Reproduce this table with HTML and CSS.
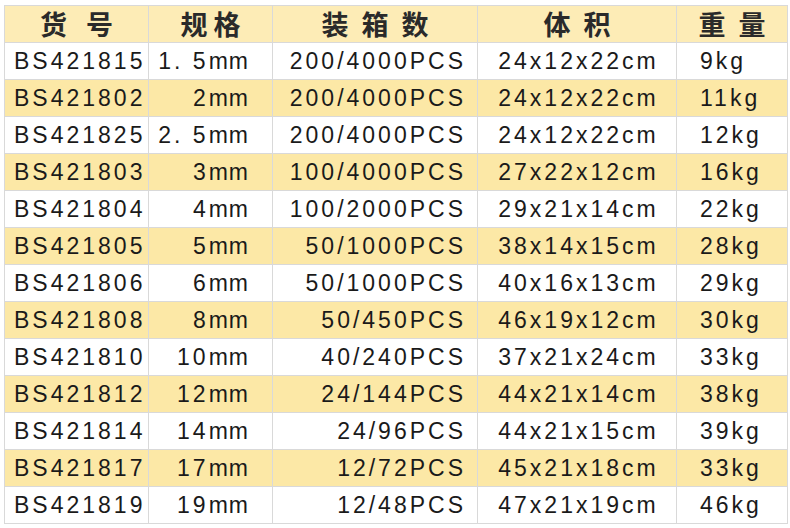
FILE: index.html
```html
<!DOCTYPE html>
<html lang="zh">
<head>
<meta charset="utf-8">
<title>规格表</title>
<link rel="stylesheet" href="styles.css">
</head>
<body>
<table class="spec">
  <colgroup>
    <col class="c1"><col class="c2"><col class="c3"><col class="c4"><col class="c5">
  </colgroup>
  <thead>
    <tr>
      <th class="h-wide">货号</th>
      <th class="h-tight">规格</th>
      <th class="h-mid">装箱数</th>
      <th class="h-mid">体积</th>
      <th class="h-mid">重量</th>
    </tr>
  </thead>
  <tbody>
    <tr><td class="code">BS421815</td><td class="size">1. 5<span class="unit">mm</span></td><td class="pack">200/4000PCS</td><td class="vol">24x12x22cm</td><td class="wt">9kg</td></tr>
    <tr class="alt"><td class="code">BS421802</td><td class="size">2<span class="unit">mm</span></td><td class="pack">200/4000PCS</td><td class="vol">24x12x22cm</td><td class="wt">11kg</td></tr>
    <tr><td class="code">BS421825</td><td class="size">2. 5<span class="unit">mm</span></td><td class="pack">200/4000PCS</td><td class="vol">24x12x22cm</td><td class="wt">12kg</td></tr>
    <tr class="alt"><td class="code">BS421803</td><td class="size">3<span class="unit">mm</span></td><td class="pack">100/4000PCS</td><td class="vol">27x22x12cm</td><td class="wt">16kg</td></tr>
    <tr><td class="code">BS421804</td><td class="size">4<span class="unit">mm</span></td><td class="pack">100/2000PCS</td><td class="vol">29x21x14cm</td><td class="wt">22kg</td></tr>
    <tr class="alt"><td class="code">BS421805</td><td class="size">5<span class="unit">mm</span></td><td class="pack">50/1000PCS</td><td class="vol">38x14x15cm</td><td class="wt">28kg</td></tr>
    <tr><td class="code">BS421806</td><td class="size">6<span class="unit">mm</span></td><td class="pack">50/1000PCS</td><td class="vol">40x16x13cm</td><td class="wt">29kg</td></tr>
    <tr class="alt"><td class="code">BS421808</td><td class="size">8<span class="unit">mm</span></td><td class="pack">50/450PCS</td><td class="vol">46x19x12cm</td><td class="wt">30kg</td></tr>
    <tr><td class="code">BS421810</td><td class="size">10<span class="unit">mm</span></td><td class="pack">40/240PCS</td><td class="vol">37x21x24cm</td><td class="wt">33kg</td></tr>
    <tr class="alt"><td class="code">BS421812</td><td class="size">12<span class="unit">mm</span></td><td class="pack">24/144PCS</td><td class="vol">44x21x14cm</td><td class="wt">38kg</td></tr>
    <tr><td class="code">BS421814</td><td class="size">14<span class="unit">mm</span></td><td class="pack">24/96PCS</td><td class="vol">44x21x15cm</td><td class="wt">39kg</td></tr>
    <tr class="alt"><td class="code">BS421817</td><td class="size">17<span class="unit">mm</span></td><td class="pack">12/72PCS</td><td class="vol">45x21x18cm</td><td class="wt">33kg</td></tr>
    <tr><td class="code">BS421819</td><td class="size">19<span class="unit">mm</span></td><td class="pack">12/48PCS</td><td class="vol">47x21x19cm</td><td class="wt">46kg</td></tr>
  </tbody>
</table>
</body>
</html>
```
FILE: styles.css
```css
html, body {
  margin: 0;
  padding: 0;
  background: #ffffff;
}

body {
  padding: 5px 0 0 4px;
}

.spec {
  border-collapse: collapse;
  table-layout: fixed;
  width: 783px;
  font-family: "Liberation Sans", "Noto Sans CJK SC", sans-serif;
  color: #1a1a1a;
}

.c1 { width: 144px; }
.c2 { width: 124px; }
.c3 { width: 205px; }
.c4 { width: 199px; }
.c5 { width: 111px; }

.spec th,
.spec td {
  border: 1px solid #d9d9d9;
  padding: 0;
  white-space: nowrap;
  overflow: hidden;
}

.spec thead tr {
  height: 37px;
  background: #fdecb6;
}

.spec th {
  font-family: "Noto Sans CJK SC", sans-serif;
  font-size: 27px;
  font-weight: 700;
  color: #2a2a2a;
  text-align: center;
  line-height: 34px;
}

.spec .h-wide { letter-spacing: 19px; text-indent: 19px; }
.spec .h-tight { letter-spacing: 6px; text-indent: 6px; }
.spec .h-mid { letter-spacing: 13px; text-indent: 13px; }

.spec tbody tr {
  height: 37px;
}

.spec tbody tr.alt {
  background: #fce8a6;
}

.spec td {
  font-size: 23px;
  letter-spacing: 3px;
  line-height: 36px;
}

.spec .unit { letter-spacing: 1px; }

.spec .code { text-align: left; padding-left: 9px; }
.spec .size { text-align: right; padding-right: 23px; }
.spec .pack { text-align: right; padding-right: 11px; }
.spec .vol  { text-align: center; padding-left: 3px; }
.spec .wt   { text-align: left; padding-left: 23px; }
```
